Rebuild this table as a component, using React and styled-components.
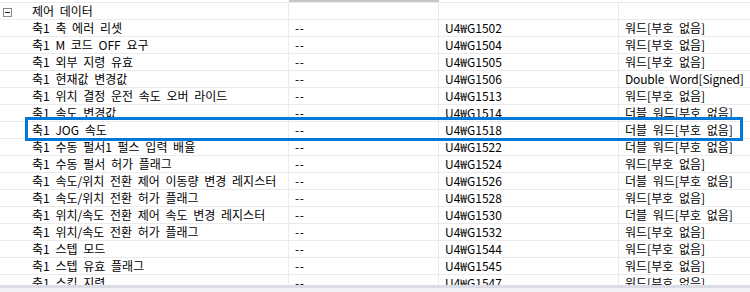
import React from "react";
import styled, { createGlobalStyle } from "styled-components";

const rows = [
  ["축1 축 에러 리셋", "--", "U4₩G1502", "워드[부호 없음]"],
  ["축1 M 코드 OFF 요구", "--", "U4₩G1504", "워드[부호 없음]"],
  ["축1 외부 지령 유효", "--", "U4₩G1505", "워드[부호 없음]"],
  ["축1 현재값 변경값", "--", "U4₩G1506", "Double Word[Signed]"],
  ["축1 위치 결정 운전 속도 오버 라이드", "--", "U4₩G1513", "워드[부호 없음]"],
  ["축1 속도 변경값", "--", "U4₩G1514", "더블 워드[부호 없음]"],
  ["축1 JOG 속도", "--", "U4₩G1518", "더블 워드[부호 없음]"],
  ["축1 수동 펄서1 펄스 입력 배율", "--", "U4₩G1522", "더블 워드[부호 없음]"],
  ["축1 수동 펄서 허가 플래그", "--", "U4₩G1524", "워드[부호 없음]"],
  ["축1 속도/위치 전환 제어 이동량 변경 레지스터", "--", "U4₩G1526", "더블 워드[부호 없음]"],
  ["축1 속도/위치 전환 허가 플래그", "--", "U4₩G1528", "워드[부호 없음]"],
  ["축1 위치/속도 전환 제어 속도 변경 레지스터", "--", "U4₩G1530", "더블 워드[부호 없음]"],
  ["축1 위치/속도 전환 허가 플래그", "--", "U4₩G1532", "워드[부호 없음]"],
  ["축1 스텝 모드", "--", "U4₩G1544", "워드[부호 없음]"],
  ["축1 스텝 유효 플래그", "--", "U4₩G1545", "워드[부호 없음]"],
  ["축1 스킵 지령", "--", "U4₩G1547", "워드[부호 없음]"],
];

const SELECTED = 6;

export default function App() {
  return (
    <>
      <GlobalStyle />
      <Frame>
        <TopStrip>
          <StripCell />
          <StripCell $active />
          <StripCell />
          <StripCell />
        </TopStrip>
        <List>
          <Row>
            <NameCell $group>
              <Expander>
                <svg width="9" height="9" viewBox="0 0 9 9">
                  <rect x="0.5" y="0.5" width="8" height="8" fill="#fff" stroke="#8a8a8a" />
                  <line x1="2" y1="4.5" x2="7" y2="4.5" stroke="#222" />
                </svg>
              </Expander>
              제어 데이터
            </NameCell>
            <Cell />
            <Cell />
            <Cell $last />
          </Row>
          {rows.map((r, i) => (
            <Row key={i}>
              <NameCell>{r[0]}</NameCell>
              <Cell $spread>{r[1]}</Cell>
              <Cell>{r[2]}</Cell>
              <Cell $last $tight={!/[가-힣]/.test(r[3])}>{r[3]}</Cell>
              {i === SELECTED && <Focus />}
            </Row>
          ))}
        </List>
        <HScroll />
      </Frame>
    </>
  );
}

const GlobalStyle = createGlobalStyle`
  body {
    margin: 0;
    background: #fff;
    overflow: hidden;
  }
`;

const Frame = styled.div`
  width: 750px;
  height: 292px;
  display: flex;
  flex-direction: column;
  overflow: hidden;
  font-family: "Noto Sans CJK KR", "Noto Sans", sans-serif;
  font-size: 12px;
  word-spacing: 3px;
  color: #000;
`;

const TopStrip = styled.div`
  display: grid;
  grid-template-columns: 289px 150px 180px 1fr;
  height: 2px;
`;

const StripCell = styled.div`
  background: ${(p) => (p.$active ? "#c6c6c6" : "#fff")};
`;

const List = styled.div`
  flex: 1;
  overflow: hidden;
  border-top: 1px solid #ebebeb;
`;

const Row = styled.div`
  position: relative;
  display: grid;
  grid-template-columns: 289px 150px 180px 1fr;
  height: 17px;
  box-sizing: border-box;
  border-bottom: 1px solid #ebebeb;
`;

const Cell = styled.div`
  display: flex;
  align-items: center;
  padding-left: 6px;
  white-space: nowrap;
  overflow: hidden;
  line-height: 16px;
  letter-spacing: ${(p) => (p.$spread ? "0.6px" : p.$tight ? "-0.2px" : "0")};
  border-right: ${(p) => (p.$last ? "none" : "1px solid #ebebeb")};
`;

const NameCell = styled(Cell)`
  padding-left: ${(p) => (p.$group ? "3px" : "32px")};
  align-items: ${(p) => (p.$group ? "flex-start" : "center")};
`;

const Expander = styled.span`
  display: block;
  width: 9px;
  height: 9px;
  margin-top: 5px;
  margin-right: 20px;
  line-height: 0;
`;

const Focus = styled.div`
  position: absolute;
  left: 25px;
  right: 7px;
  top: -5px;
  height: 24px;
  box-sizing: border-box;
  border: 3px solid #0078d7;
  z-index: 2;
  pointer-events: none;
`;

const HScroll = styled.div`
  height: 7px;
  box-sizing: border-box;
  border-top: 3px solid #dcdce6;
  background: #f0f0f5;
`;
